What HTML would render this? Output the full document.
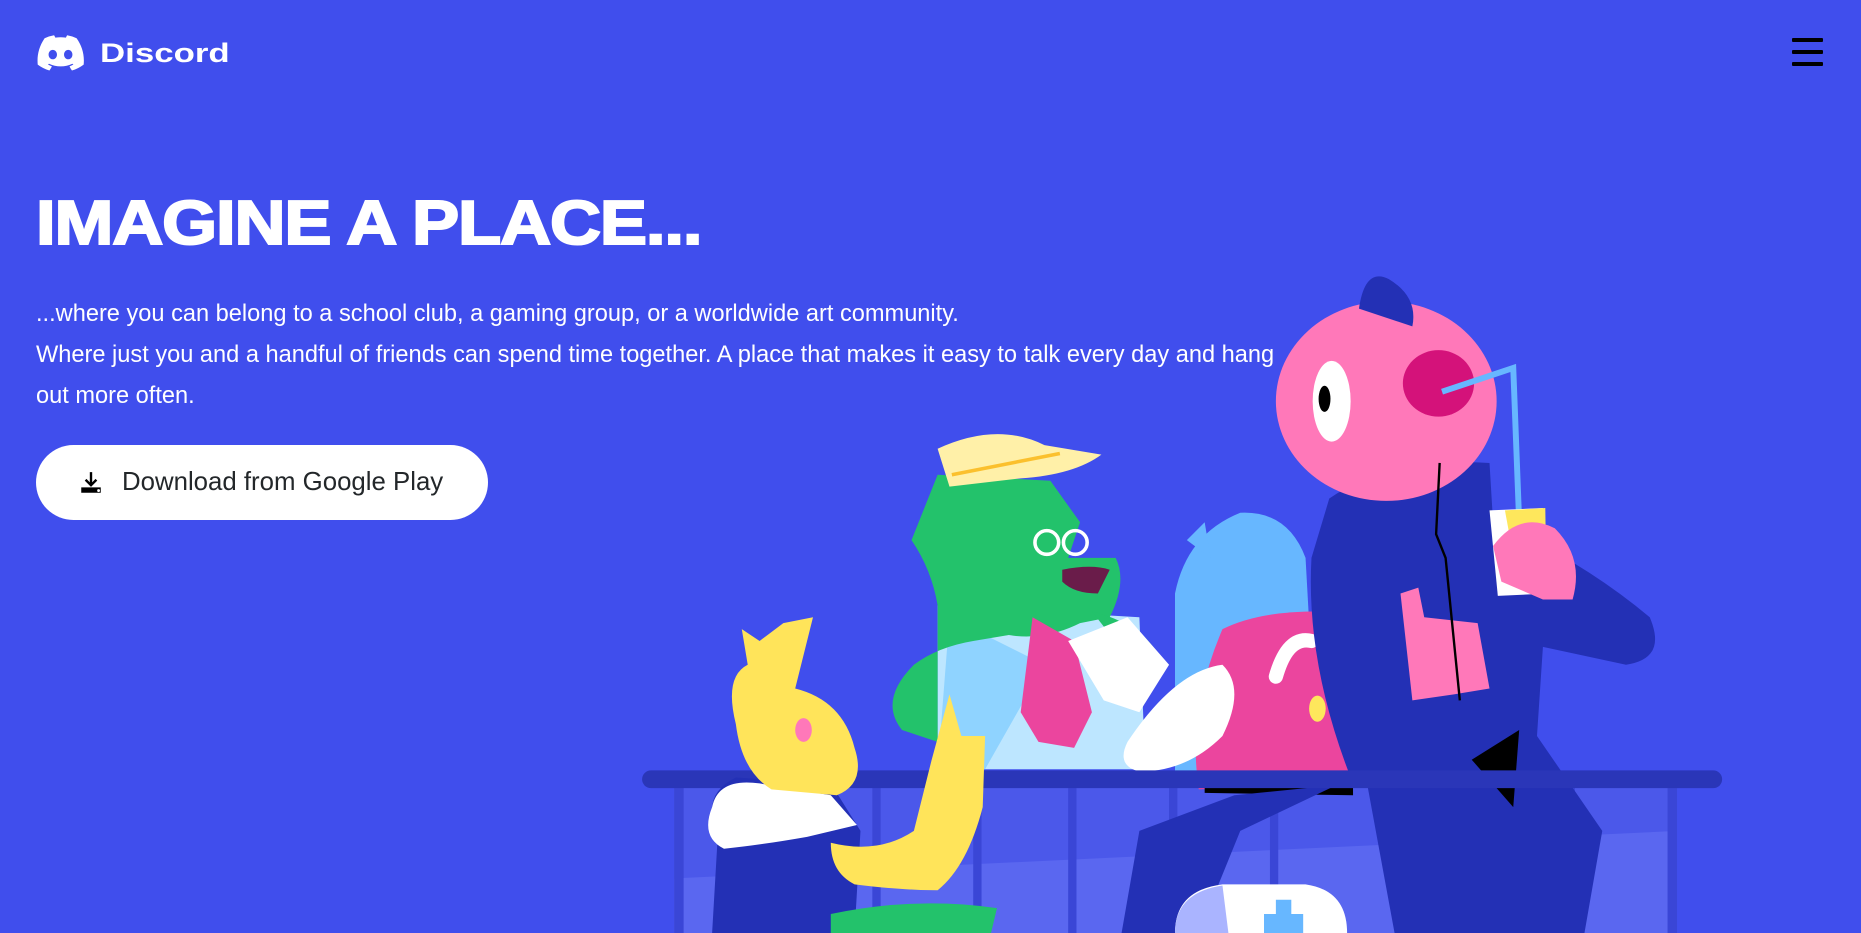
<!DOCTYPE html>
<html><head><meta charset="utf-8"><style>
*{margin:0;padding:0;box-sizing:border-box}
html,body{width:1861px;height:933px;overflow:hidden;background:#404eed;font-family:"Liberation Sans",sans-serif;color:#fff}
.logo{position:absolute;left:37px;top:35px;display:flex;align-items:center}
.logo span{font-weight:bold;font-size:27px;margin-left:16px;display:inline-block;transform-origin:0 50%;transform:scaleX(1.29)}
.ham{position:absolute;left:1792px;top:38px;width:31px}
.ham div{height:4px;background:#000;margin-bottom:8px;border-radius:1px}
h1{position:absolute;left:36px;top:188px;font-size:62px;font-weight:900;letter-spacing:-1px;transform-origin:0 0;transform:scaleX(1.14);white-space:nowrap;-webkit-text-stroke:2px #fff}
p{position:absolute;left:36px;top:294px;font-size:23.6px;line-height:41px;white-space:nowrap}
.btn{position:absolute;left:36px;top:445px;width:452px;height:75px;border-radius:38px;background:#fff;color:#23272a;font-size:25.8px;display:flex;align-items:center;padding-left:42px}
.btn svg{margin-right:18px}
svg.art{position:absolute;left:0;top:0}
</style></head><body>
<svg class="art" width="1861" height="933" viewBox="0 0 1568 786" preserveAspectRatio="none">
 <rect x="568" y="660" width="845" height="126" fill="#4b58ea"/>
 <path d="M568 740 L1413 700 L1413 786 L568 786Z" fill="#5a67f0"/>
 <g fill="#3a46d6">
  <rect x="568" y="660" width="8" height="126"/><rect x="650" y="660" width="7" height="126"/><rect x="735" y="660" width="7" height="126"/>
  <rect x="820" y="660" width="7" height="126"/><rect x="900" y="660" width="7" height="126"/><rect x="985" y="660" width="7" height="126"/>
  <rect x="1070" y="660" width="7" height="126"/><rect x="1240" y="660" width="7" height="126"/><rect x="1320" y="660" width="7" height="126"/><rect x="1405" y="660" width="8" height="126"/>
 </g>
 <path d="M990 500 Q1000 450 1045 432 Q1085 430 1100 470 L1110 650 L990 650Z" fill="#67b7ff"/>
 <path d="M1000 455 L1020 470 L1015 440Z" fill="#67b7ff"/>
 <path d="M790 510 L960 520 L965 648 L790 648Z" fill="#bde6ff"/>
 <path d="M800 520 L880 560 L830 648 L790 648Z" fill="#8fd3ff"/>
 <path d="M790 400 L885 405 L910 440 L900 470 L940 470 Q950 490 935 520 L910 525 Q880 540 850 535 L820 540 Q790 545 770 560 Q740 590 760 615 L790 625 L790 510 Q785 480 768 455Z" fill="#23c26b"/>
 <path d="M920 515 Q960 525 975 550 L955 560 Z" fill="#23c26b"/>
 <path d="M790 378 Q840 355 880 375 L928 383 Q905 400 860 403 L800 410Z" fill="#fff0a8"/>
 <path d="M802 400 L893 382" stroke="#fbc02d" stroke-width="3"/>
 <path d="M895 480 Q920 475 935 480 L925 500 Q905 500 895 490Z" fill="#6a1c4a"/>
 <circle cx="882" cy="457" r="10" fill="none" stroke="#fff" stroke-width="3"/><circle cx="906" cy="457" r="10" fill="none" stroke="#fff" stroke-width="3"/>
 <path d="M870 520 L905 540 L920 600 L905 630 L875 625 L860 600Z" fill="#eb459e"/>
 <path d="M900 540 L950 520 L985 560 L960 600 L930 590Z" fill="#fff"/>
 <path d="M1030 530 Q1060 515 1110 515 L1135 520 L1140 660 L1010 665 Q1000 600 1030 530Z" fill="#eb459e"/>
 <path d="M1015 655 L1140 650 L1140 670 L1015 668Z" fill="#000"/>
 <path d="M950 625 Q990 565 1030 560 Q1050 580 1030 620 Q1000 650 960 650 Q940 645 950 625Z" fill="#fff"/>
 <path d="M1075 570 Q1085 535 1105 540" stroke="#fff" stroke-width="12" fill="none" stroke-linecap="round"/>
 <ellipse cx="1110" cy="597" rx="7" ry="11" fill="#fee75c"/>
 <path d="M1120 420 Q1170 385 1255 390 L1258 440 Q1330 470 1390 520 Q1405 555 1370 560 L1300 545 L1295 620 L1350 700 L1335 786 L1175 786 L1150 650 L1045 700 L1010 786 L945 786 L960 700 L1040 670 L1140 660 Q1100 560 1105 470Z" fill="#2330b5"/>
 <ellipse cx="1168" cy="338" rx="93" ry="84" fill="#ff78b9"/>
 <path d="M1145 260 Q1150 225 1170 235 Q1195 250 1190 275 Z" fill="#2330b5"/>
 <ellipse cx="1122" cy="338" rx="16" ry="34" fill="#fff"/><ellipse cx="1116" cy="336" rx="5" ry="11" fill="#000"/>
 <ellipse cx="1212" cy="323" rx="30" ry="28" fill="#d4127a"/>
 <path d="M1215 330 L1275 310 L1280 440" stroke="#67b7ff" stroke-width="5" fill="none"/>
 <path d="M1255 430 L1300 428 L1305 500 L1262 502Z" fill="#fff"/><path d="M1268 430 L1302 428 L1303 495 L1280 495Z" fill="#fee75c"/>
 <path d="M1258 460 Q1280 430 1310 445 Q1335 470 1325 505 L1300 505 L1265 490Z" fill="#ff78b9"/>
 <path d="M1180 500 L1195 495 L1200 520 L1245 525 L1255 580 L1225 585 L1190 590Z" fill="#ff78b9"/>
 <path d="M1213 390 L1210 450 L1218 470 L1230 590" stroke="#000" stroke-width="2" fill="none"/>
 <path d="M1240 640 L1280 615 L1275 680Z" fill="#000"/>
 <rect x="541" y="649" width="910" height="15" rx="7.5" fill="#2a36b8"/>
 <path d="M605 700 Q590 670 620 655 L700 660 L725 700 L720 786 L600 786Z" fill="#2330b5"/>
 <path d="M600 680 Q605 655 640 660 L700 670 L722 695 L680 705 Q640 712 610 715 Q590 705 600 680Z" fill="#fff"/>
 <path d="M620 610 Q610 570 630 560 L625 530 L640 540 L660 525 L685 520 L670 580 Q710 590 720 630 Q730 660 705 670 L650 665 Q625 650 620 610Z" fill="#ffe45a"/>
 <path d="M700 710 Q740 720 770 700 L785 640 L800 585 L810 620 L830 620 L828 680 Q815 730 790 750 Q760 750 720 745 Q700 735 700 710Z" fill="#ffe45a"/>
 <ellipse cx="677" cy="615" rx="7" ry="10" fill="#ff78b9"/>
 <path d="M700 770 Q770 755 840 765 L835 786 L700 786Z" fill="#23c26b"/>
 <path d="M990 786 Q990 750 1030 745 L1100 745 Q1135 750 1135 786Z" fill="#fff"/>
 <path d="M990 786 Q990 752 1030 746 L1035 786Z" fill="#aab4ff"/>
 <path d="M1065 786 L1065 770 L1075 770 L1075 758 L1088 758 L1088 770 L1098 770 L1098 786Z" fill="#67b7ff"/>
</svg>
<div class="logo"><svg width="47" height="36" viewBox="0 0 71 55"><path fill="#fff" d="M60.1 4.9A58.5 58.5 0 0 0 45.6.4a40 40 0 0 0-1.8 3.7 54 54 0 0 0-16.2 0A38 38 0 0 0 25.7.4 58.4 58.4 0 0 0 11.2 4.9C2 18.6-.5 32 .7 45.2a58.9 58.9 0 0 0 17.9 9.1 44 44 0 0 0 3.8-6.3 38 38 0 0 1-6-2.9l1.5-1.1a42 42 0 0 0 35.8 0l1.5 1.1a38 38 0 0 1-6 2.9 44 44 0 0 0 3.8 6.3 58.7 58.7 0 0 0 17.9-9.1C72.4 29.9 68.3 16.6 60.1 4.9ZM23.7 37.1c-3.5 0-6.4-3.2-6.4-7.2s2.8-7.2 6.4-7.2 6.5 3.3 6.4 7.2c0 4-2.8 7.2-6.4 7.2Zm23.6 0c-3.5 0-6.4-3.2-6.4-7.2s2.8-7.2 6.4-7.2 6.5 3.3 6.4 7.2c0 4-2.8 7.2-6.4 7.2Z"/></svg><span>Discord</span></div>
<div class="ham"><div></div><div></div><div></div></div>
<h1>IMAGINE A PLACE...</h1>
<p>...where you can belong to a school club, a gaming group, or a worldwide art community.<br>Where just you and a handful of friends can spend time together. A place that makes it easy to talk every day and hang<br>out more often.</p>
<div class="btn"><svg width="26" height="26" viewBox="0 0 24 24"><path d="M12 2v12M7 9l5 5 5-5" stroke="#000" stroke-width="2.2" fill="none"/><path d="M3 16h18v5H3z" fill="#000"/><circle cx="19" cy="19" r="1.3" fill="#fff"/></svg>Download from Google Play</div>
</body></html>
